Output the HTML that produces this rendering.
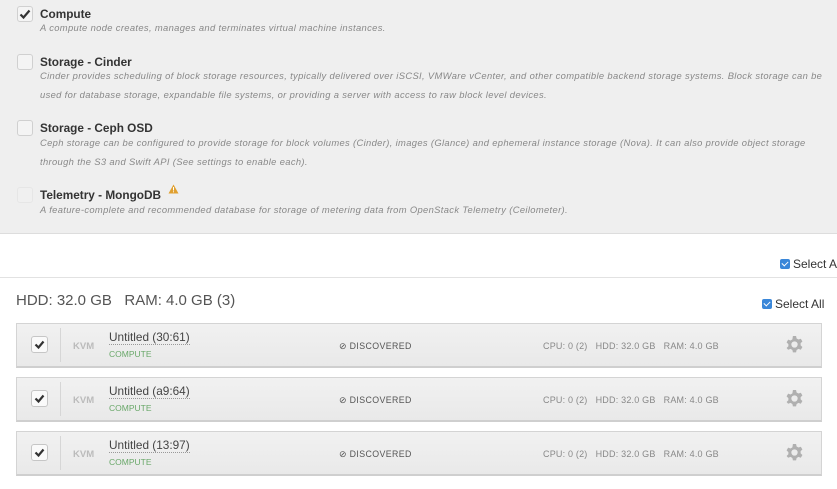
<!DOCTYPE html>
<html><head><style>
*{margin:0;padding:0;box-sizing:border-box}
body{width:837px;height:489px;background:#fff;font-family:"Liberation Sans",sans-serif;position:relative;overflow:hidden}
.top{position:absolute;left:0;top:0;width:837px;height:234px;background:#efefef;border-bottom:1px solid #ddd}
.cb{position:absolute;left:17px;width:16px;height:16px;border:1px solid #d0d0d0;border-radius:3px;background:#f4f4f4}
.t{position:absolute;left:40px;font-size:11.8px;font-weight:bold;color:#333;line-height:13px;white-space:nowrap}
.d{position:absolute;left:40px;font-size:9.4px;letter-spacing:0.35px;font-style:italic;color:#888;line-height:19px;width:790px}
.a{position:absolute;top:248px;width:837px;height:30px;border-bottom:1px solid #e2e2e2}
.sq{display:inline-block;width:10px;height:10px;background:#3a87d9;border-radius:2px;vertical-align:-1px;margin-right:3px;position:relative}
.sq:after{content:"";position:absolute;left:3px;top:1px;width:3px;height:5px;border:solid #fff;border-width:0 1.3px 1.3px 0;transform:rotate(45deg)}
.row{position:absolute;left:16px;width:806px;height:45px;background:linear-gradient(#f1f1f1,#e9e9e9);border:1px solid #d4d4d4;border-bottom:2px solid #cfcfcf}
.row .c{position:absolute;left:14px;top:12px;width:17px;height:17px;border:1px solid #c6c6c6;border-radius:3px;background:#fafafa}
.row .sep{position:absolute;left:43px;top:4px;bottom:4px;border-left:1px solid #d6d6d6}
.kvm{position:absolute;left:56px;top:17px;font-size:9.5px;font-weight:bold;color:#bbb}
.nm{position:absolute;left:92px;top:6px;font-size:11.8px;color:#444;border-bottom:1px dotted #999}
.cp{position:absolute;left:92px;top:25px;font-size:8.5px;color:#6aa86a}
.ds{position:absolute;left:322px;top:17px;font-size:8.8px;letter-spacing:0.4px;color:#555}
.sp{position:absolute;left:526px;top:17px;font-size:9px;letter-spacing:0.2px;color:#888;white-space:pre}
.g{position:absolute;left:768px;top:11px}
</style></head><body>
<div class="top">
<div class="cb" style="top:6px"><svg width="14" height="14" style="position:absolute;left:0;top:0"><path d="M2.5 7.5 L5.5 10.5 L11.5 3.5" stroke="#333" stroke-width="2.2" fill="none"/></svg></div>
<div class="t" style="top:8px">Compute</div>
<div class="d" style="top:18px">A compute node creates, manages and terminates virtual machine instances.</div>
<div class="cb" style="top:54px"></div>
<div class="t" style="top:56px">Storage - Cinder</div>
<div class="d" style="top:66px">Cinder provides scheduling of block storage resources, typically delivered over iSCSI, VMWare vCenter, and other compatible backend storage systems. Block storage can be used for database storage, expandable file systems, or providing a server with access to raw block level devices.</div>
<div class="cb" style="top:120px"></div>
<div class="t" style="top:122px">Storage - Ceph OSD</div>
<div class="d" style="top:133px">Ceph storage can be configured to provide storage for block volumes (Cinder), images (Glance) and ephemeral instance storage (Nova). It can also provide object storage through the S3 and Swift API (See settings to enable each).</div>
<div class="cb" style="top:187px;border-color:#e6e6e6;background:#f0f0f0"></div>
<div class="t" style="top:189px">Telemetry - MongoDB</div>
<svg width="11" height="10" style="position:absolute;left:168px;top:184px"><path d="M5.5 0.5 L10.5 9.5 L0.5 9.5Z" fill="#e0a030"/><rect x="5" y="3" width="1" height="3.5" fill="#fff"/><rect x="5" y="7.3" width="1" height="1" fill="#fff"/></svg>
<div class="d" style="top:200px">A feature-complete and recommended database for storage of metering data from OpenStack Telemetry (Ceilometer).</div>
</div>
<div class="a"><div style="position:absolute;left:780px;top:9px;font-size:12px;color:#333;white-space:nowrap"><span class="sq"></span>Select All</div></div>
<div style="position:absolute;left:16px;top:292px;font-size:15px;color:#555;white-space:pre">HDD: 32.0 GB   RAM: 4.0 GB (3)</div>
<div style="position:absolute;left:762px;top:297px;font-size:12px;color:#333;white-space:nowrap"><span class="sq"></span>Select All</div>
<div class="row" style="top:323px"><div class="c"><svg width="15" height="15"><path d="M3.5 7.5 L6.5 10.5 L11.5 4.5" stroke="#333" stroke-width="2.2" fill="none"/></svg></div><div class="sep"></div><div class="kvm">KVM</div><div class="nm">Untitled (30:61)</div><div class="cp">COMPUTE</div><div class="ds">⊘ DISCOVERED</div><div class="sp">CPU: 0 (2)   HDD: 32.0 GB   RAM: 4.0 GB</div><svg class="g" width="19" height="19" viewBox="0 0 18 18"><path d="M7.5 1h3l.5 2.3 1.8 1 2.2-.8 1.5 2.6-1.7 1.6v2.1l1.7 1.6-1.5 2.6-2.2-.8-1.8 1-.5 2.3h-3l-.5-2.3-1.8-1-2.2.8L1.5 12.3l1.7-1.6V8.6L1.5 7l1.5-2.6 2.2.8 1.8-1z" fill="#b0b0b0"/><circle cx="9" cy="9" r="3" fill="#ececec"/></svg></div>
<div class="row" style="top:377px"><div class="c"><svg width="15" height="15"><path d="M3.5 7.5 L6.5 10.5 L11.5 4.5" stroke="#333" stroke-width="2.2" fill="none"/></svg></div><div class="sep"></div><div class="kvm">KVM</div><div class="nm">Untitled (a9:64)</div><div class="cp">COMPUTE</div><div class="ds">⊘ DISCOVERED</div><div class="sp">CPU: 0 (2)   HDD: 32.0 GB   RAM: 4.0 GB</div><svg class="g" width="19" height="19" viewBox="0 0 18 18"><path d="M7.5 1h3l.5 2.3 1.8 1 2.2-.8 1.5 2.6-1.7 1.6v2.1l1.7 1.6-1.5 2.6-2.2-.8-1.8 1-.5 2.3h-3l-.5-2.3-1.8-1-2.2.8L1.5 12.3l1.7-1.6V8.6L1.5 7l1.5-2.6 2.2.8 1.8-1z" fill="#b0b0b0"/><circle cx="9" cy="9" r="3" fill="#ececec"/></svg></div>
<div class="row" style="top:431px"><div class="c"><svg width="15" height="15"><path d="M3.5 7.5 L6.5 10.5 L11.5 4.5" stroke="#333" stroke-width="2.2" fill="none"/></svg></div><div class="sep"></div><div class="kvm">KVM</div><div class="nm">Untitled (13:97)</div><div class="cp">COMPUTE</div><div class="ds">⊘ DISCOVERED</div><div class="sp">CPU: 0 (2)   HDD: 32.0 GB   RAM: 4.0 GB</div><svg class="g" width="19" height="19" viewBox="0 0 18 18"><path d="M7.5 1h3l.5 2.3 1.8 1 2.2-.8 1.5 2.6-1.7 1.6v2.1l1.7 1.6-1.5 2.6-2.2-.8-1.8 1-.5 2.3h-3l-.5-2.3-1.8-1-2.2.8L1.5 12.3l1.7-1.6V8.6L1.5 7l1.5-2.6 2.2.8 1.8-1z" fill="#b0b0b0"/><circle cx="9" cy="9" r="3" fill="#ececec"/></svg></div>
</body></html>
